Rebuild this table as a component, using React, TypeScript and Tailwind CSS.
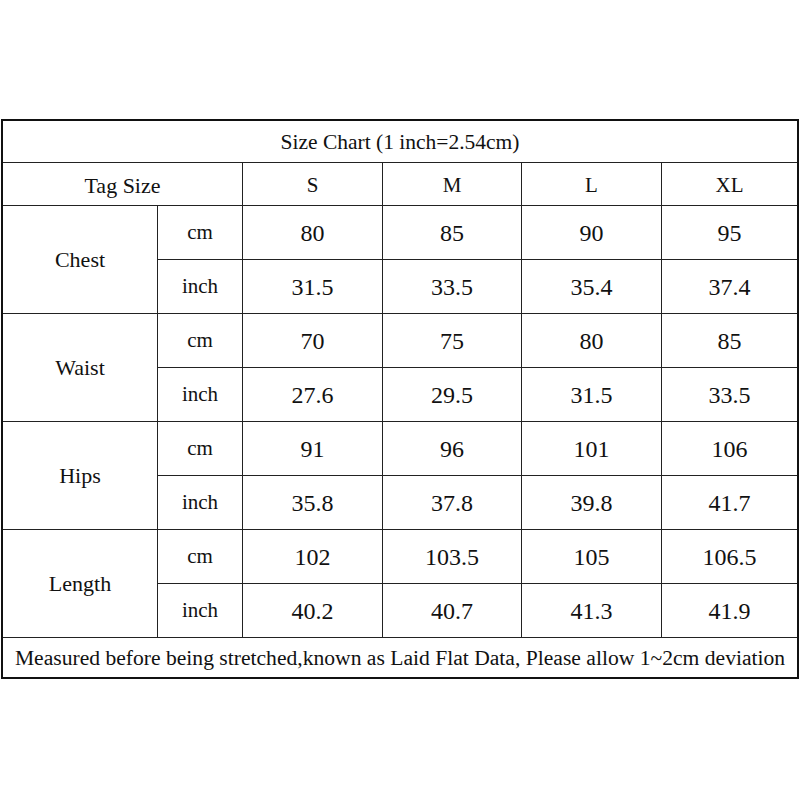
import React from "react";

const sizes = ["S", "M", "L", "XL"];
const data: { name: string; cm: string[]; inch: string[] }[] = [
  { name: "Chest", cm: ["80", "85", "90", "95"], inch: ["31.5", "33.5", "35.4", "37.4"] },
  { name: "Waist", cm: ["70", "75", "80", "85"], inch: ["27.6", "29.5", "31.5", "33.5"] },
  { name: "Hips", cm: ["91", "96", "101", "106"], inch: ["35.8", "37.8", "39.8", "41.7"] },
  { name: "Length", cm: ["102", "103.5", "105", "106.5"], inch: ["40.2", "40.7", "41.3", "41.9"] },
];

const cell = "bg-white flex items-center justify-center";

export default function App() {
  return (
    <div className="w-[800px] h-[800px] bg-white pt-[119px] pl-[1px]" style={{ fontFamily: '"Liberation Serif", "Times New Roman", serif' }}>
      <div
        className="w-[798px] border-2 border-[#111] bg-[#222] grid gap-[1px] text-[#111] text-[24px] leading-none"
        style={{
          gridTemplateColumns: "154px 84px 139px 138px 139px 135px",
          gridTemplateRows: "41px 42px repeat(8, 53px) 39px",
        }}
      >
        <div className={`${cell} col-span-6 text-[21.5px] pt-[3px]`}>Size Chart (1 inch=2.54cm)</div>
        <div className={`${cell} col-span-2 text-[22px] pt-[3px]`}>Tag Size</div>
        {sizes.map((s) => (
          <div key={s} className={`${cell} text-[21px] pt-[3px]`}>{s}</div>
        ))}
        {data.map((d) => (
          <React.Fragment key={d.name}>
            <div className={`${cell} row-span-2 text-[22px]`}>{d.name}</div>
            <div className={`${cell} text-[21px]`}>cm</div>
            {d.cm.map((v, i) => (
              <div key={"c" + i} className={cell}>{v}</div>
            ))}
            <div className={`${cell} text-[21px]`}>inch</div>
            {d.inch.map((v, i) => (
              <div key={"i" + i} className={cell}>{v}</div>
            ))}
          </React.Fragment>
        ))}
        <div className={`${cell} col-span-6 text-[21.6px] pt-[3px]`}>
          Measured before being stretched,known as Laid Flat Data, Please allow 1~2cm deviation
        </div>
      </div>
    </div>
  );
}
